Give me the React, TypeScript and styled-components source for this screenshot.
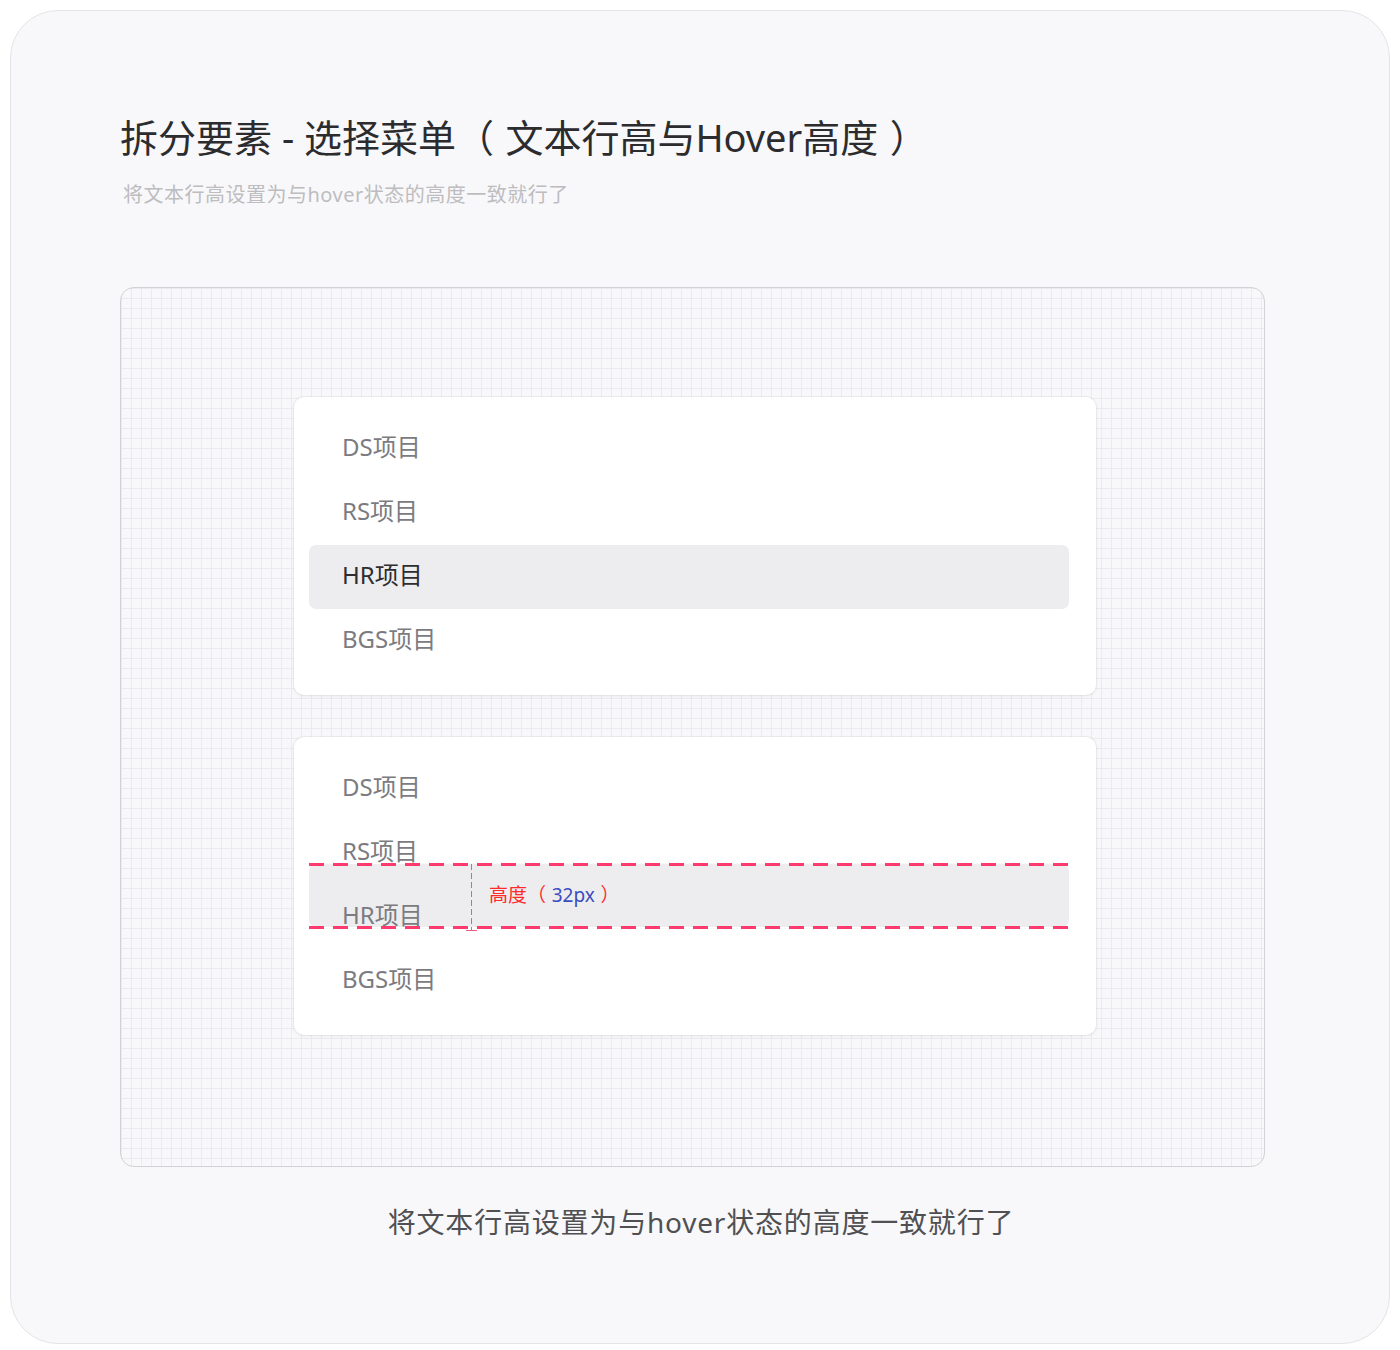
import React from "react";
import styled, { createGlobalStyle } from "styled-components";

const Global = createGlobalStyle`
  html, body { margin: 0; padding: 0; background: #ffffff; }
  body { font-family: "Noto Sans", "Noto Sans CJK SC", sans-serif; }
  * { box-sizing: border-box; }
`;

const Page = styled.div`
  padding: 10px;
  width: 1400px;
`;

const Frame = styled.div`
  width: 1380px;
  height: 1334px;
  border: 1px solid #e4e4e7;
  border-radius: 48px;
  background: #f8f8fa;
  padding: 98px 0 0 109px;
  display: flex;
  flex-direction: column;
`;

const Title = styled.h1`
  margin: 0;
  font-size: 38px;
  font-weight: 400;
  line-height: 56px;
  color: #2c2c2e;
  letter-spacing: 0;
  white-space: nowrap;
`;

const Paren = styled.span<{ $open?: boolean }>`
  margin-left: ${(p) => (p.$open ? "0" : "0.3em")};
  margin-right: ${(p) => (p.$open ? "0.3em" : "0")};
`;

const Subtitle = styled.p`
  margin: 15px 0 0 3px;
  font-size: 20px;
  line-height: 30px;
  letter-spacing: 0.5px;
  color: #bdbdc0;
`;

const Canvas = styled.div`
  margin-top: 77px;
  width: 1145px;
  height: 880px;
  border: 1.5px solid #d2d2d6;
  border-radius: 14px;
  background-color: #f8f8fa;
  background-image:
    linear-gradient(to right, #ebebef 1px, transparent 1px),
    linear-gradient(to bottom, #ebebef 1px, transparent 1px);
  background-size: 10px 10px;
  background-position: 0 0;
  padding: 109px 0 0 173px;
  display: flex;
  flex-direction: column;
  gap: 42px;
`;

const Menu = styled.div`
  position: relative;
  width: 802px;
  height: 298px;
  background: #ffffff;
  border-radius: 10px;
  box-shadow: 0 0 0 1px rgba(0, 0, 0, 0.04), 0 1px 4px rgba(0, 0, 0, 0.06);
  padding: 20px 27px 0 15px;
  display: flex;
  flex-direction: column;
`;

const Item = styled.div<{ $active?: boolean }>`
  position: relative;
  z-index: 1;
  height: 64px;
  line-height: 60px;
  padding-left: 33px;
  padding-bottom: 4px;
  border-radius: 7px;
  font-size: 24px;
  color: ${(p) => (p.$active ? "#2e2e30" : "#7b7b80")};
  background: ${(p) => (p.$active ? "#ededef" : "transparent")};
`;

const HoverBand = styled.div`
  position: absolute;
  left: 15px;
  top: 127px;
  width: 760px;
  height: 63px;
  background: #ededef;
  border-radius: 7px;
  z-index: 0;
`;

const DashLine = styled.div<{ $top: number }>`
  position: absolute;
  left: 15px;
  top: ${(p) => p.$top}px;
  width: 760px;
  height: 3px;
  z-index: 2;
  background: repeating-linear-gradient(
    to right,
    #ff3a6c 0 15px,
    transparent 15px 24px
  );
`;

const VRule = styled.div`
  position: absolute;
  left: 177px;
  top: 127px;
  width: 1px;
  height: 67px;
  z-index: 2;
  background: repeating-linear-gradient(
    to bottom,
    #ef5a80 0 6px,
    transparent 6px 9px
  );
`;

const Tick = styled.div`
  position: absolute;
  left: 172px;
  top: 193px;
  width: 11px;
  height: 1px;
  z-index: 2;
  background: #ef5a80;
`;

const Measure = styled.div`
  position: absolute;
  left: 195px;
  top: 144px;
  z-index: 2;
  font-size: 19px;
  line-height: 28px;
  color: #ff2a2a;
  white-space: nowrap;
`;

const Blue = styled.span`
  color: #3a4cc0;
`;

const Caption = styled.p`
  margin: 35px 0 0 -109px;
  width: 1380px;
  text-align: center;
  font-size: 28px;
  line-height: 40px;
  letter-spacing: 0.8px;
  color: #505052;
`;

const items = ["DS项目", "RS项目", "HR项目", "BGS项目"];

export default function App() {
  return (
    <Page>
      <Global />
      <Frame>
        <Title>
          拆分要素 - 选择菜单<Paren $open>（</Paren>文本行高与Hover高度<Paren>）</Paren>
        </Title>
        <Subtitle>将文本行高设置为与hover状态的高度一致就行了</Subtitle>
        <Canvas>
          <Menu>
            {items.map((t, i) => (
              <Item key={t} $active={i === 2}>
                {t}
              </Item>
            ))}
          </Menu>
          <Menu>
            <HoverBand />
            {items.map((t) => (
              <Item key={t}>{t}</Item>
            ))}
            <DashLine $top={126} />
            <DashLine $top={189} />
            <VRule />
            <Tick />
            <Measure>
              高度<Paren $open>（</Paren>
              <Blue>32px</Blue>
              <Paren>）</Paren>
            </Measure>
          </Menu>
        </Canvas>
        <Caption>将文本行高设置为与hover状态的高度一致就行了</Caption>
      </Frame>
    </Page>
  );
}
